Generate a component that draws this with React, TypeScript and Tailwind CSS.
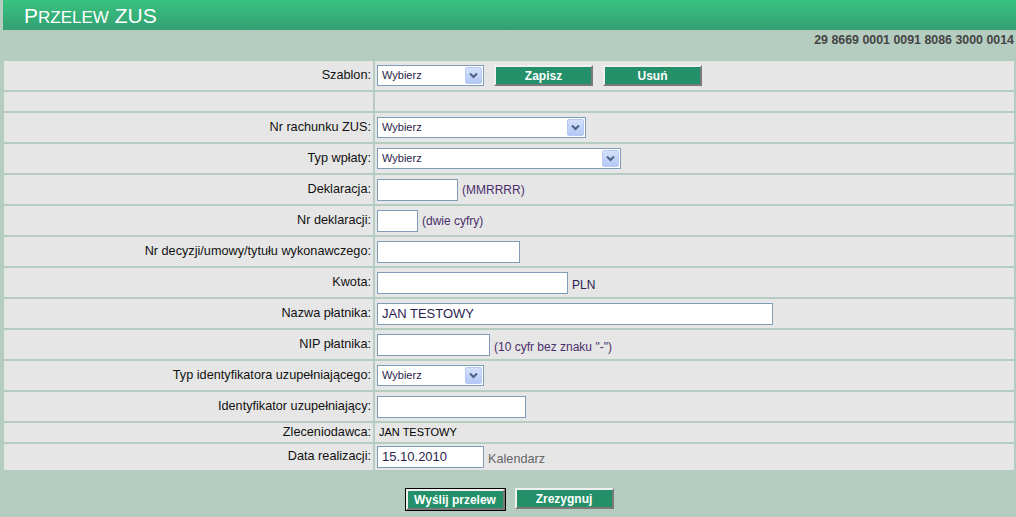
import React from "react";

const FONT = "font-['Liberation_Sans',Arial,sans-serif]";

function SelectBox({ width }: { width: string }) {
  return (
    <div
      className={`flex h-[21px] items-center justify-between border border-[#7f9db9] bg-white pl-[4px] pr-[1px] ${width}`}
    >
      <span className="text-[11px] leading-none text-[#2a1e46]">Wybierz</span>
      <span className="flex h-[17px] w-[17px] items-center justify-center rounded-[2px] border border-[#b6c9f4] bg-gradient-to-b from-[#d6e2fc] to-[#b3c8f5]">
        <svg width="9" height="7" viewBox="0 0 9 7">
          <path d="M1 1.5 L4.5 5 L8 1.5" fill="none" stroke="#4d6185" strokeWidth="2" />
        </svg>
      </span>
    </div>
  );
}

function TextBox({ width, value }: { width: string; value?: string }) {
  return (
    <div
      className={`flex h-[22px] items-center border border-[#7f9db9] bg-white pl-[4px] text-[13px] text-[#2b1d4f] ${width}`}
    >
      {value}
    </div>
  );
}

function Btn({ label, def }: { label: string; def?: boolean }) {
  return (
    <div className={def ? "border border-black" : ""}>
      <div className="flex h-[21px] w-[99px] items-center justify-center border-2 border-t-[#f0f0f0] border-l-[#f0f0f0] border-b-[#7a7a7a] border-r-[#7a7a7a] bg-[#24906a] text-[12px] font-bold text-white">
        {label}
      </div>
    </div>
  );
}

function Row({
  label,
  h = "h-[29px]",
  children,
}: {
  label?: string;
  h?: string;
  children?: React.ReactNode;
}) {
  return (
    <div className={`grid grid-cols-[369px_1fr] gap-x-[2px] ${h}`}>
      <div className="flex items-center justify-end bg-[#e6e6e6] pr-[2px] text-[12.7px] text-[#111]">
        {label}
      </div>
      <div className="flex items-center gap-[4px] bg-[#e6e6e6] pl-[2px]">{children}</div>
    </div>
  );
}

const hint = "text-[12px] text-[#4b2e6b]";

export default function App() {
  return (
    <div className={`h-[517px] w-[1016px] overflow-hidden bg-[#b5cdc0] ${FONT}`}>
      <header className="ml-[3px] flex h-[30px] items-center bg-gradient-to-b from-[#38c37f] to-[#34a073] pl-[21px] text-white">
        <h1 className="leading-none">
          <span className="text-[21px]">P</span>
          <span className="text-[17px]">RZELEW</span>
          <span className="text-[21px]"> ZUS</span>
        </h1>
      </header>

      <div className="flex h-[31px] justify-end pr-[2px] pt-[1px] text-[12.4px] font-bold text-[#444]">
        29 8669 0001 0091 8086 3000 0014
      </div>

      <section className="ml-[4px] flex w-[1010px] flex-col gap-[2px]">
        <Row label="Szablon:">
          <SelectBox width="w-[107px]" />
          <div className="ml-[6px] flex gap-[10px]">
            <Btn label="Zapisz" />
            <Btn label="Usuń" />
          </div>
        </Row>
        <Row h="h-[19px]" />
        <Row label="Nr rachunku ZUS:">
          <SelectBox width="w-[209px]" />
        </Row>
        <Row label="Typ wpłaty:">
          <SelectBox width="w-[244px]" />
        </Row>
        <Row label="Deklaracja:">
          <TextBox width="w-[81px]" />
          <span className={hint}>(MMRRRR)</span>
        </Row>
        <Row label="Nr deklaracji:">
          <TextBox width="w-[41px]" />
          <span className={hint}>(dwie cyfry)</span>
        </Row>
        <Row label="Nr decyzji/umowy/tytułu wykonawczego:">
          <TextBox width="w-[143px]" />
        </Row>
        <Row label="Kwota:">
          <TextBox width="w-[191px]" />
          <span className="mt-[4px] text-[12px] text-[#2b1d4f]">PLN</span>
        </Row>
        <Row label="Nazwa płatnika:">
          <TextBox width="w-[396px]" value="JAN TESTOWY" />
        </Row>
        <Row label="NIP płatnika:">
          <TextBox width="w-[113px]" />
          <span className={`mt-[4px] ${hint}`}>(10 cyfr bez znaku "-")</span>
        </Row>
        <Row label="Typ identyfikatora uzupełniającego:">
          <SelectBox width="w-[107px]" />
        </Row>
        <Row label="Identyfikator uzupełniający:">
          <TextBox width="w-[149px]" />
        </Row>
        <Row label="Zleceniodawca:" h="h-[19px]">
          <span className="pl-[2px] text-[11px] text-black">JAN TESTOWY</span>
        </Row>
        <Row label="Data realizacji:" h="h-[26px]">
          <TextBox width="w-[107px]" value="15.10.2010" />
          <span className="mt-[6px] text-[12.7px] text-[#666]">Kalendarz</span>
        </Row>
      </section>

      <div className="mt-[18px] flex justify-center gap-[9px] pl-[2px]">
        <Btn label="Wyślij przelew" def />
        <Btn label="Zrezygnuj" />
      </div>
    </div>
  );
}
